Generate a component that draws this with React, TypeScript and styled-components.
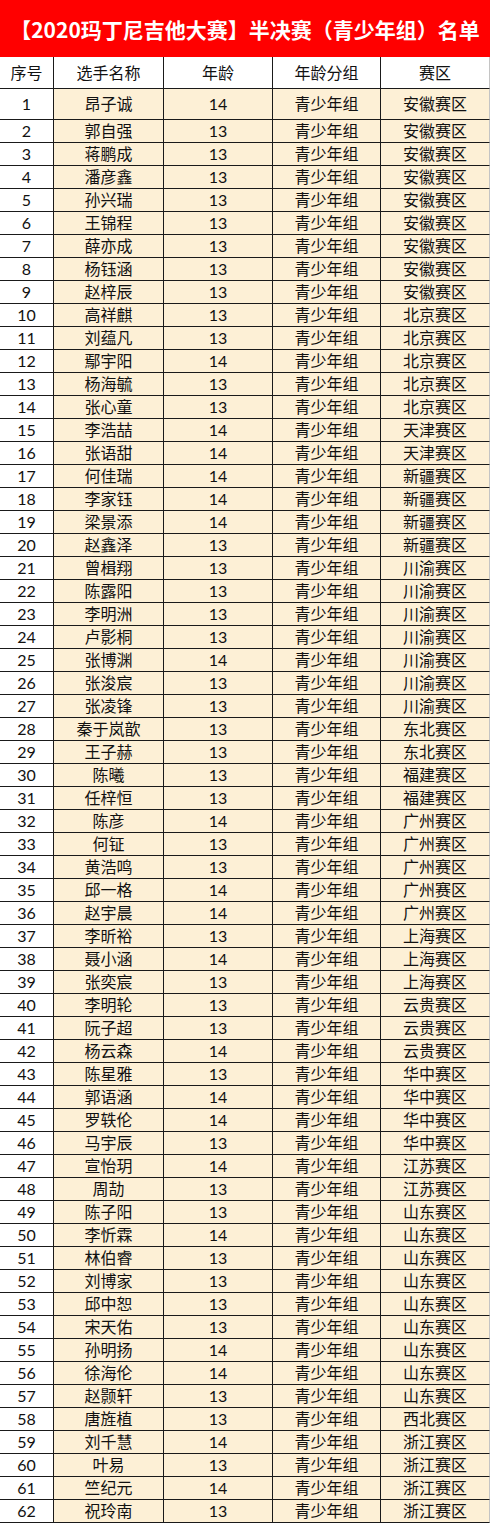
import React from 'react';
import styled, { createGlobalStyle } from 'styled-components';

const GlobalStyle = createGlobalStyle`
  html, body {
    margin: 0;
    padding: 0;
    background: #fff;
  }
  body {
    font-family: "Noto Sans CJK SC", "Noto Sans", sans-serif;
  }
`;

const Sheet = styled.div`
  width: 490px;
  display: flex;
  flex-direction: column;
`;

const TitleBar = styled.div`
  height: 57px;
  background: #ff0000;
  color: #fff;
  display: flex;
  align-items: center;
  justify-content: center;
  font-family: "Noto Sans CJK SC", sans-serif;
  font-weight: 700;
  font-size: 21px;
  letter-spacing: 0;
  white-space: nowrap;
`;

const Row = styled.div<{ $h: number }>`
  display: grid;
  grid-template-columns: 54px 110px 109px 108px 109px;
  height: ${p => p.$h}px;
`;

const Cell = styled.div<{ $cream?: boolean; $last?: boolean }>`
  box-sizing: border-box;
  display: flex;
  align-items: center;
  justify-content: center;
  background: ${p => (p.$cream ? '#fdf0d6' : '#ffffff')};
  border-bottom: 1px solid #1a1a1a;
  border-right: 1px solid ${p => (p.$last ? '#c4c4c4' : '#1a1a1a')};
  font-family: Lato, "Noto Sans CJK SC", sans-serif;
  font-size: 16px;
  color: #111;
  line-height: 1;
  white-space: nowrap;
`;

const players: [string, number, string][] = [
  ['昂子诚', 14, '安徽赛区'],
  ['郭自强', 13, '安徽赛区'],
  ['蒋鹏成', 13, '安徽赛区'],
  ['潘彦鑫', 13, '安徽赛区'],
  ['孙兴瑞', 13, '安徽赛区'],
  ['王锦程', 13, '安徽赛区'],
  ['薛亦成', 13, '安徽赛区'],
  ['杨钰涵', 13, '安徽赛区'],
  ['赵梓辰', 13, '安徽赛区'],
  ['高祥麒', 13, '北京赛区'],
  ['刘蕴凡', 13, '北京赛区'],
  ['鄢宇阳', 14, '北京赛区'],
  ['杨海毓', 13, '北京赛区'],
  ['张心童', 13, '北京赛区'],
  ['李浩喆', 14, '天津赛区'],
  ['张语甜', 14, '天津赛区'],
  ['何佳瑞', 14, '新疆赛区'],
  ['李家钰', 14, '新疆赛区'],
  ['梁景添', 14, '新疆赛区'],
  ['赵鑫泽', 13, '新疆赛区'],
  ['曾楫翔', 13, '川渝赛区'],
  ['陈露阳', 13, '川渝赛区'],
  ['李明洲', 13, '川渝赛区'],
  ['卢影桐', 13, '川渝赛区'],
  ['张博渊', 14, '川渝赛区'],
  ['张浚宸', 13, '川渝赛区'],
  ['张凌锋', 13, '川渝赛区'],
  ['秦于岚歆', 13, '东北赛区'],
  ['王子赫', 13, '东北赛区'],
  ['陈曦', 13, '福建赛区'],
  ['任梓恒', 13, '福建赛区'],
  ['陈彦', 14, '广州赛区'],
  ['何钲', 13, '广州赛区'],
  ['黄浩鸣', 13, '广州赛区'],
  ['邱一格', 14, '广州赛区'],
  ['赵宇晨', 14, '广州赛区'],
  ['李昕裕', 13, '上海赛区'],
  ['聂小涵', 14, '上海赛区'],
  ['张奕宸', 13, '上海赛区'],
  ['李明轮', 13, '云贵赛区'],
  ['阮子超', 13, '云贵赛区'],
  ['杨云森', 14, '云贵赛区'],
  ['陈星雅', 13, '华中赛区'],
  ['郭语涵', 14, '华中赛区'],
  ['罗轶伦', 14, '华中赛区'],
  ['马宇辰', 13, '华中赛区'],
  ['宣怡玥', 14, '江苏赛区'],
  ['周劼', 13, '江苏赛区'],
  ['陈子阳', 13, '山东赛区'],
  ['李忻霖', 14, '山东赛区'],
  ['林伯睿', 13, '山东赛区'],
  ['刘博家', 13, '山东赛区'],
  ['邱中恕', 13, '山东赛区'],
  ['宋天佑', 13, '山东赛区'],
  ['孙明扬', 14, '山东赛区'],
  ['徐海伦', 14, '山东赛区'],
  ['赵颢轩', 13, '山东赛区'],
  ['唐旌植', 13, '西北赛区'],
  ['刘千慧', 14, '浙江赛区'],
  ['叶易', 13, '浙江赛区'],
  ['竺纪元', 14, '浙江赛区'],
  ['祝玲南', 13, '浙江赛区'],
];

const headers = ['序号', '选手名称', '年龄', '年龄分组', '赛区'];

export default function App() {
  return (
    <>
      <GlobalStyle />
      <Sheet>
        <TitleBar>【2020玛丁尼吉他大赛】半决赛（青少年组）名单</TitleBar>
        <Row $h={32}>
          {headers.map((h, i) => (
            <Cell key={h} $last={i === headers.length - 1}>{h}</Cell>
          ))}
        </Row>
        {players.map(([name, age, region], i) => (
          <Row key={i} $h={i === 0 ? 31 : 23}>
            <Cell>{i + 1}</Cell>
            <Cell $cream>{name}</Cell>
            <Cell $cream>{age}</Cell>
            <Cell $cream>青少年组</Cell>
            <Cell $cream $last>{region}</Cell>
          </Row>
        ))}
      </Sheet>
    </>
  );
}
